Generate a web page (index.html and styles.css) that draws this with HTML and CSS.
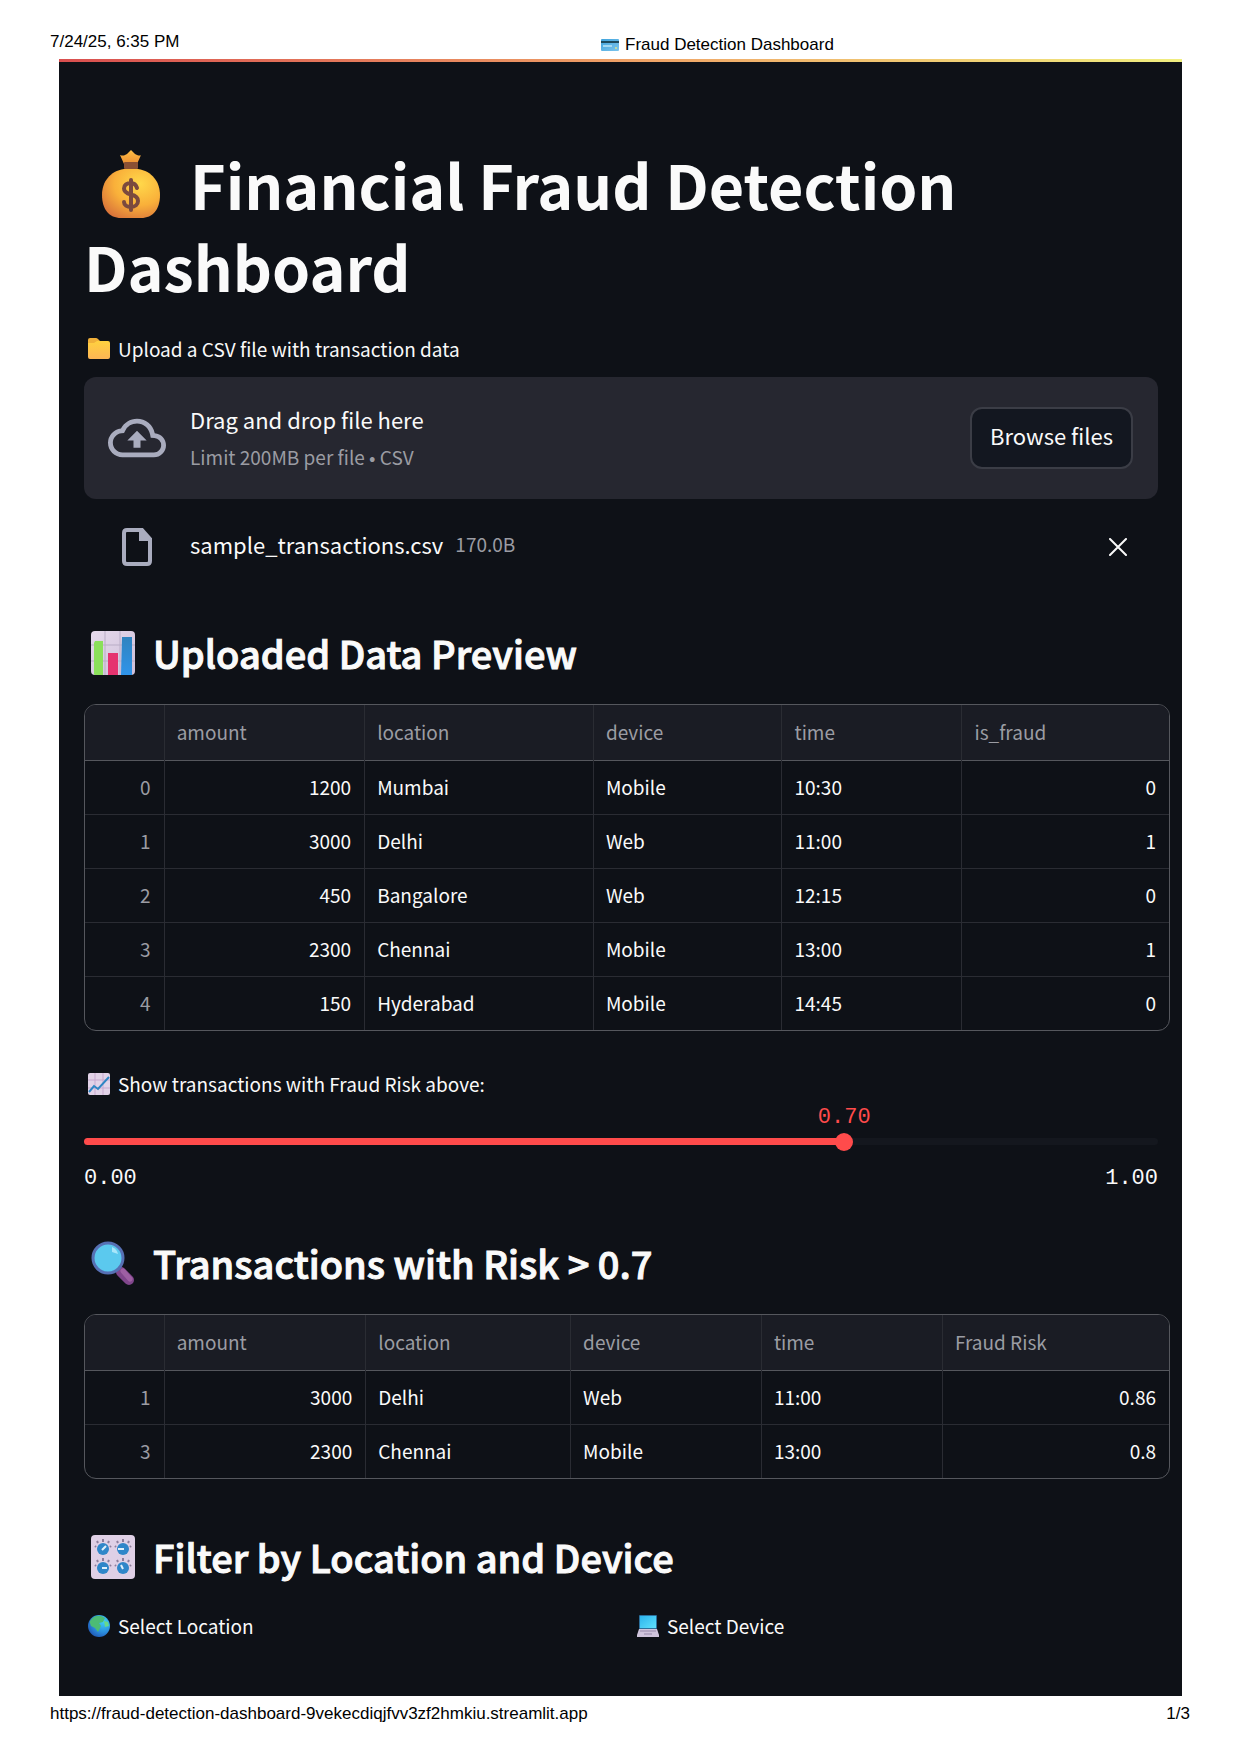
FILE: index.html
```html
<!DOCTYPE html>
<html lang="en">
<head>
<meta charset="utf-8">
<meta name="viewport" content="width=device-width, initial-scale=1">
<title>Fraud Detection Dashboard</title>
<link rel="stylesheet" href="styles.css">
</head>
<body>
<header class="sheet-header">
  <span>7/24/25, 6:35 PM</span>
  <span class="sheet-title">
    <svg class="card-icon" viewBox="0 0 18 12" aria-hidden="true">
      <defs><linearGradient id="card" x1="0" y1="0" x2="1" y2="1"><stop offset="0" stop-color="#3fa3dc"/><stop offset="1" stop-color="#7cc4ec"/></linearGradient></defs>
      <rect width="18" height="12" rx="1" fill="url(#card)"/>
      <rect y="2" width="18" height="2" fill="#1d4a5c"/>
      <rect x="2" y="6" width="9" height="2" fill="#a5daf3"/>
      <circle cx="15" cy="9" r="1" fill="#d8e58e"/>
    </svg>
    Fraud Detection Dashboard
  </span>
</header>

<main class="app">
  <h1 class="title"><svg class="title-icon" viewBox="0 0 58 68" aria-hidden="true">
      <defs>
        <radialGradient id="bag" cx=".65" cy=".3" r=".8"><stop offset="0" stop-color="#ffd84a"/><stop offset=".55" stop-color="#f9b03a"/><stop offset="1" stop-color="#d9743a"/></radialGradient>
        <linearGradient id="neck" x1="0" y1="0" x2="0" y2="1"><stop offset="0" stop-color="#ffbf45"/><stop offset="1" stop-color="#ec8f33"/></linearGradient>
      </defs>
      <path d="M22 14 18 5q3 1 5 0l2-1 4-4 4 4 2 1q3 1 4 0L35 14z" fill="url(#neck)"/>
      <path d="M22 19C8 21 0 32 0 45c0 14 7 23 19 23h20c12 0 19-9 19-23 0-13-8-24-22-26z" fill="url(#bag)"/>
      <rect x="22" y="12" width="14" height="7" rx="1" fill="#8a5034"/>
      <path d="M35 38c-1-3-3-5-6-5-4 0-7 2-7 5.500s3 5 7 6 7 3 7 6.500-3 6-7 6-7-2-7-5M29 30v30" fill="none" stroke="#7b4a3e" stroke-width="4" stroke-linecap="round"/>
    </svg>Financial Fraud Detection Dashboard</h1>

  <section class="uploader">
    <p class="field-label"><svg class="label-icon" viewBox="0 0 22 22" aria-hidden="true">
        <defs><linearGradient id="folder" x1="0" y1="0" x2="0" y2="1"><stop offset="0" stop-color="#ffd13f"/><stop offset="1" stop-color="#fdb555"/></linearGradient></defs>
        <path d="M0 2q0-2 2-2h6q1 0 2 1l2 2v3H0z" fill="#f0b03a"/>
        <path d="M0 5h6l3-2h11q2 0 2 2v14q0 2-2 2H2q-2 0-2-2z" fill="url(#folder)"/>
      </svg>Upload a CSV file with transaction data</p>
    <div class="dropzone">
      <svg class="cloud-icon" viewBox="0 0 24 24" aria-hidden="true"><path fill="currentColor" d="M19.350 10.040A7.490 7.490 0 0 0 12 4C9.110 4 6.600 5.640 5.350 8.040A5.994 5.994 0 0 0 0 14c0 3.310 2.690 6 6 6h13c2.760 0 5-2.240 5-5 0-2.640-2.050-4.780-4.650-4.960zM19 18H6c-2.210 0-4-1.790-4-4 0-2.050 1.530-3.760 3.560-3.970l1.070-.11.5-.95A5.469 5.469 0 0 1 12 6c2.620 0 4.880 1.860 5.390 4.430l.3 1.500 1.530.11A2.980 2.980 0 0 1 22 15c0 1.650-1.350 3-3 3zM8 13h2.550v3h2.900v-3H16l-4-4z"/></svg>
      <div class="drop-text">
        <span class="drop-title">Drag and drop file here</span>
        <span class="muted">Limit 200MB per file • CSV</span>
      </div>
      <button class="browse" type="button">Browse files</button>
    </div>
    <div class="file-row">
      <svg class="file-icon" viewBox="0 0 30 38" aria-hidden="true"><path d="M5 2h15l8 9v22q0 3-3 3H5q-3 0-3-3V5q0-3 3-3z" fill="none" stroke="currentColor" stroke-width="4"/><path d="M17 2h3l9 10v1H17z" fill="currentColor"/></svg>
      <span class="file-name">sample_transactions.csv</span>
      <span class="file-size muted">170.0B</span>
      <button class="remove" type="button" aria-label="Remove file"><svg viewBox="0 0 18 18" aria-hidden="true"><path d="m1 1 16 16M17 1 1 17" stroke="currentColor" stroke-width="2" stroke-linecap="round"/></svg></button>
    </div>
  </section>

  <h2 class="section-title"><svg class="section-icon" viewBox="0 0 44 44" aria-hidden="true">
      <defs>
        <linearGradient id="panel" x1="0" y1="0" x2="1" y2="1"><stop offset="0" stop-color="#e6daec"/><stop offset="1" stop-color="#cdbfd9"/></linearGradient>
        <linearGradient id="blue" x1="0" y1="0" x2="0" y2="1"><stop offset="0" stop-color="#2f83bf"/><stop offset="1" stop-color="#2f94ea"/></linearGradient>
      </defs>
      <rect width="44" height="44" rx="4" fill="url(#panel)"/>
      <path d="M0 14h44M0 30h44M14 0v44M29 0v44" stroke="#b9adc6" stroke-width="1"/>
      <path d="M4 10h8v34H4q-1 0-1-1V12z" fill="#8be05b"/>
      <rect x="17" y="22" width="10" height="22" fill="#e5336f"/>
      <path d="M31 6h10v38H30z" fill="url(#blue)"/>
    </svg>Uploaded Data Preview</h2>

  <div class="table-frame">
    <table class="data preview">
      <colgroup><col class="c-index"><col class="c-amount"><col class="c-location"><col class="c-device"><col class="c-time"><col></colgroup>
      <thead><tr><th></th><th>amount</th><th>location</th><th>device</th><th>time</th><th>is_fraud</th></tr></thead>
      <tbody>
        <tr><th>0</th><td class="num">1200</td><td>Mumbai</td><td>Mobile</td><td>10:30</td><td class="num">0</td></tr>
        <tr><th>1</th><td class="num">3000</td><td>Delhi</td><td>Web</td><td>11:00</td><td class="num">1</td></tr>
        <tr><th>2</th><td class="num">450</td><td>Bangalore</td><td>Web</td><td>12:15</td><td class="num">0</td></tr>
        <tr><th>3</th><td class="num">2300</td><td>Chennai</td><td>Mobile</td><td>13:00</td><td class="num">1</td></tr>
        <tr><th>4</th><td class="num">150</td><td>Hyderabad</td><td>Mobile</td><td>14:45</td><td class="num">0</td></tr>
      </tbody>
    </table>
  </div>

  <section class="slider-field">
    <label class="field-label" for="risk"><svg class="label-icon" viewBox="0 0 22 22" aria-hidden="true">
        <rect width="22" height="22" rx="2" fill="#e2d3e8"/>
        <path d="M0 7h22M0 15h22M7 0v22M15 0v22" stroke="#c7a9cf" stroke-width="1"/>
        <path d="m1 19 5-6 4 3L21 4" fill="none" stroke="#2f86c4" stroke-width="2"/>
      </svg>Show transactions with Fraud Risk above:</label>
    <div class="slider" style="--value: 0.7">
      <output class="slider-value" for="risk">0.70</output>
      <div class="slider-track"><div class="slider-fill"></div></div>
      <input class="slider-input" id="risk" type="range" min="0" max="1" step="0.01" value="0.7">
    </div>
    <div class="slider-range"><span>0.00</span><span>1.00</span></div>
  </section>

  <h2 class="section-title"><svg class="section-icon" viewBox="0 0 44 44" aria-hidden="true">
      <path d="m30 31 8 8" stroke="#80468c" stroke-width="10" stroke-linecap="round"/>
      <path d="m32 30 7 8" stroke="#9d5fa3" stroke-width="5" stroke-linecap="round"/>
      <circle cx="17" cy="17" r="15" fill="#5bc9ee" stroke="#5670b4" stroke-width="3"/>
      <path d="M21 6q5 2 6 7l-6-2z" fill="#a8e6fa"/>
    </svg>Transactions with Risk &gt; 0.7</h2>

  <div class="table-frame">
    <table class="data risky">
      <colgroup><col class="c-index"><col class="c-amount"><col class="c-location"><col class="c-device"><col class="c-time"><col></colgroup>
      <thead><tr><th></th><th>amount</th><th>location</th><th>device</th><th>time</th><th>Fraud Risk</th></tr></thead>
      <tbody>
        <tr><th>1</th><td class="num">3000</td><td>Delhi</td><td>Web</td><td>11:00</td><td class="num">0.86</td></tr>
        <tr><th>3</th><td class="num">2300</td><td>Chennai</td><td>Mobile</td><td>13:00</td><td class="num">0.8</td></tr>
      </tbody>
    </table>
  </div>

  <h2 class="section-title"><svg class="section-icon" viewBox="0 0 44 44" aria-hidden="true">
      <defs>
        <g id="knob">
          <path d="M-5-6-6-8M0-7v-3M5-6l1-2M-7-2l-1-1M7-2l1-1" stroke="#8d7d9b" stroke-width="2"/>
          <circle r="6" fill="#2f86c9"/>
        </g>
      </defs>
      <rect width="44" height="44" rx="4" fill="#dfd0e6"/>
      <use href="#knob" x="12" y="14"/><use href="#knob" x="32" y="14"/><use href="#knob" x="12" y="33"/><use href="#knob" x="32" y="33"/>
      <path d="m11 15 4-4M27 14h6M11 33h5M32 34l-2-4" stroke="#dff1fc" stroke-width="2"/>
    </svg>Filter by Location and Device</h2>

  <section class="filters">
    <p class="field-label"><svg class="label-icon" viewBox="0 0 22 22" aria-hidden="true">
        <defs><radialGradient id="sea" cx=".7" cy=".3" r=".8"><stop offset="0" stop-color="#3fd0f5"/><stop offset=".6" stop-color="#2b8ede"/><stop offset="1" stop-color="#1f58b5"/></radialGradient></defs>
        <circle cx="11" cy="11" r="11" fill="url(#sea)"/>
        <path d="M2 6q4-6 11-5l4 2-2 4-4 1 2 3-3 6-3-4-4-2-1-3z" fill="#4cbc75"/>
        <path d="m16 6 4 1 1 4-4 1z" fill="#67d98a"/>
      </svg>Select Location</p>
    <p class="field-label"><svg class="label-icon" viewBox="0 0 22 22" aria-hidden="true">
        <defs><linearGradient id="screen" x1="0" y1="0" x2="1" y2="1"><stop offset="0" stop-color="#2cb4ee"/><stop offset="1" stop-color="#5fe0fb"/></linearGradient></defs>
        <rect x="2" width="18" height="14" rx="1" fill="#2a6f9c"/>
        <rect x="3" y="1" width="16" height="12" fill="url(#screen)"/>
        <path d="M2 14h18l2 6v2H0v-2z" fill="#cfc4dc"/>
        <path d="M3 16h16M7 19h8" stroke="#9587a8" stroke-width="1"/>
      </svg>Select Device</p>
  </section>
</main>

<footer class="sheet-footer">
  <a class="source" href="https://fraud-detection-dashboard-9vekecdiqjfvv3zf2hmkiu.streamlit.app">https://fraud-detection-dashboard-9vekecdiqjfvv3zf2hmkiu.streamlit.app</a>
  <span>1/3</span>
</footer>
</body>
</html>
```
FILE: styles.css
```css
:root {
  --bg: #0e1117;
  --panel: #262730;
  --head: #1a1c24;
  --line: #2a2c33;
  --line-strong: #55575d;
  --text: #fafafa;
  --muted: #9b9ca3;
  --icon: #a9acbe;
  --accent: #ff4b4b;
  --sans: "Noto Sans CJK JP", "Noto Sans CJK SC", sans-serif;
}

* { box-sizing: border-box; }

body {
  margin: 0;
  background: #fff;
  color: #000;
  font: 17px/20px "Liberation Sans", Arial, sans-serif;
}

h1, h2, p { margin: 0; }
svg { flex: none; }
button { font: inherit; color: inherit; }

.sheet-header {
  display: grid;
  grid-template-columns: 551fr 589fr;
  height: 59px;
  padding: 32px 50px 0;
}
.sheet-title {
  display: flex;
  align-items: center;
  gap: 6px;
  height: 26px;
}
.card-icon { width: 18px; height: 12px; }

.sheet-footer {
  display: flex;
  justify-content: space-between;
  padding: 8px 50px 24px;
}
.source { color: inherit; text-decoration: none; }

.app {
  margin: 0 58px 0 59px;
  padding: 81px 24px 56px 25px;
  border-top: 3px solid;
  border-image: linear-gradient(90deg, #d94f4f, #f0a868 55%, #f0ee80) 1;
  background: var(--bg);
  color: var(--text);
  font-family: var(--sans);
}

.title {
  font-size: 61px;
  font-weight: 700;
  line-height: 82px;
}
.title-icon {
  width: 58px;
  height: 68px;
  margin: 0 30px 0 18px;
  vertical-align: -8px;
}

.field-label {
  display: flex;
  align-items: center;
  gap: 8px;
  padding-left: 4px;
  font-size: 19px;
  font-weight: 400;
  line-height: 28px;
}
.label-icon { width: 22px; height: 22px; }

.uploader { margin-top: 28px; }
.dropzone {
  display: flex;
  align-items: center;
  min-height: 122px;
  margin-top: 14px;
  padding: 0 25px 0 24px;
  border-radius: 12px;
  background: var(--panel);
}
.cloud-icon { width: 58px; height: 58px; color: var(--icon); }
.drop-text {
  display: flex;
  flex: 1;
  flex-direction: column;
  gap: 4px;
  padding-left: 24px;
}
.drop-title, .browse, .file-name {
  font-size: 22px;
  line-height: 34px;
}
.muted {
  color: var(--muted);
  font-size: 19px;
  line-height: 34px;
}
.browse {
  height: 62px;
  padding: 0 18px 6px;
  border: 2px solid #3b3d46;
  border-radius: 12px;
  background: #131720;
}
.file-row {
  display: flex;
  align-items: center;
  gap: 12px;
  height: 56px;
  margin-top: 20px;
  padding: 0 31px 0 38px;
}
.file-icon { width: 30px; height: 38px; margin-right: 26px; color: var(--icon); }
.file-name, .file-size { padding-bottom: 6px; }
.remove {
  display: flex;
  margin-left: auto;
  padding: 0;
  border: 0;
  background: none;
}
.remove svg { width: 18px; height: 18px; }

.section-title {
  display: flex;
  align-items: center;
  gap: 18px;
  margin-top: 48px;
  padding-left: 7px;
  font-size: 38px;
  font-weight: 500;
  line-height: 60px;
  -webkit-text-stroke: 1px currentColor;
}
.slider-field + .section-title { margin-top: 44px; }
.section-icon { width: 44px; height: 44px; }

.table-frame {
  overflow: hidden;
  margin: 21px -12px 0 0;
  border: 1px solid var(--line-strong);
  border-radius: 12px;
}
.data {
  width: 100%;
  border-collapse: collapse;
  table-layout: fixed;
  font-size: 19px;
  line-height: 28px;
}
.data th, .data td {
  height: 54px;
  padding: 0 13px 0 12px;
  border-left: 1px solid var(--line);
  border-top: 1px solid var(--line);
  text-align: left;
}
.data tr > :first-child { border-left: 0; }
.data thead th {
  height: 55px;
  border-top: 0;
  background: var(--head);
}
.data th { color: var(--muted); font-weight: 400; }
.data tbody th, .data .num { text-align: right; }
.data tbody tr:first-child > * { border-top-color: var(--line-strong); }

.c-index { width: 7.3%; }
.preview .c-amount { width: 18.5%; }
.preview .c-location { width: 21.1%; }
.preview .c-device { width: 17.4%; }
.preview .c-time { width: 16.6%; }
.risky .c-amount { width: 18.6%; }
.risky .c-location { width: 18.9%; }
.risky .c-device { width: 17.6%; }
.risky .c-time { width: 16.7%; }

.slider-field {
  margin-top: 39px;
  font-size: 22px;
  line-height: 28px;
}
.slider {
  --at: calc(var(--value) * (100% + 12px));
  position: relative;
  height: 54px;
  padding-top: 40px;
}
.slider-value {
  position: absolute;
  top: 6px;
  left: var(--at);
  color: var(--accent);
  transform: translateX(-50%);
}
.slider-value, .slider-range { font-family: "Liberation Mono", monospace; }
.slider-track {
  height: 7px;
  border-radius: 4px;
  background: #14171e;
}
.slider-fill {
  width: var(--at);
  height: 100%;
  border-radius: inherit;
  background: var(--accent);
}
.slider-input {
  position: absolute;
  top: 34px;
  left: -9px;
  width: calc(100% + 30px);
  height: 19px;
  margin: 0;
  appearance: none;
  background: none;
}
.slider-input::-webkit-slider-thumb {
  width: 18px;
  height: 18px;
  border-radius: 50%;
  appearance: none;
  background: var(--accent);
}
.slider-range {
  display: flex;
  justify-content: space-between;
  margin-top: 17px;
  line-height: 20px;
}

.filters {
  display: grid;
  grid-template-columns: 1fr 1fr;
  gap: 24px;
  margin-top: 25px;
}
```
